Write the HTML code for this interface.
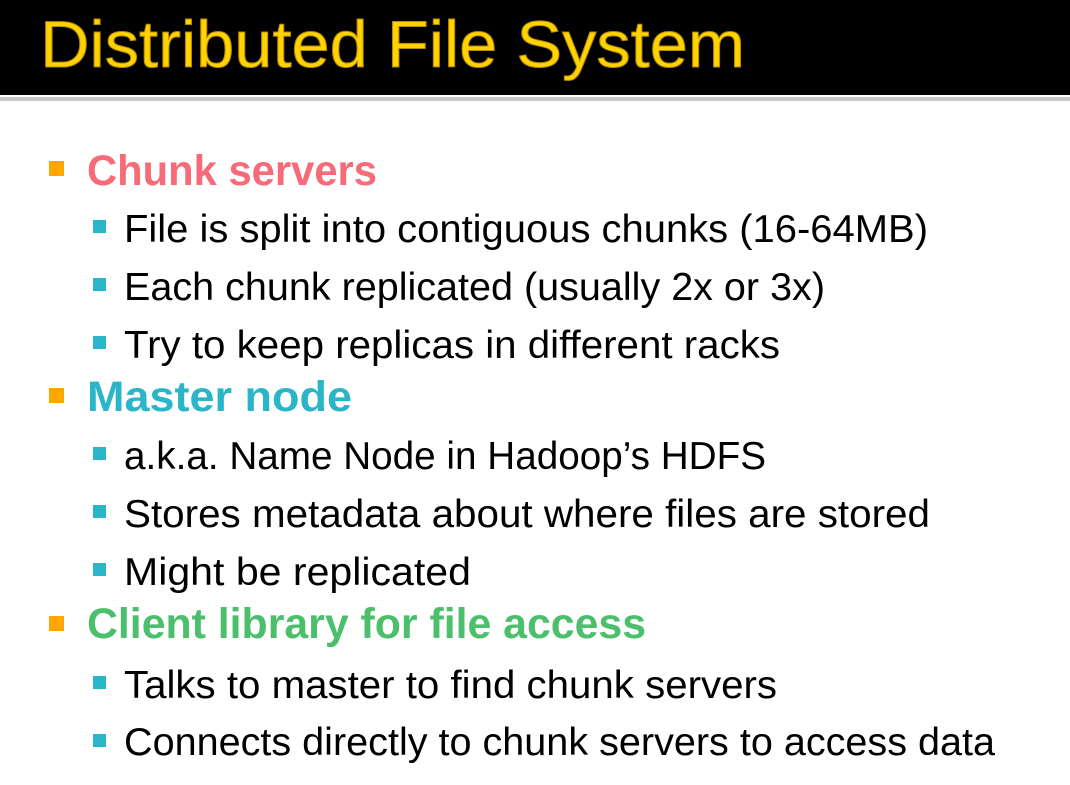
<!DOCTYPE html>
<html><head><style>
html,body{margin:0;padding:0;background:#fff;width:1070px;height:785px;overflow:hidden}
svg text{font-family:"Liberation Sans",sans-serif}
</style></head><body>
<svg width="1070" height="785" viewBox="0 0 1070 785" xmlns="http://www.w3.org/2000/svg">
<rect x="0" y="0" width="1070" height="95" fill="#000"/>
<rect x="0" y="95" width="1070" height="2" fill="#fff"/>
<rect x="0" y="97" width="1070" height="4" fill="#c8c8c8"/>
<text x="40" y="67" font-size="66" fill="#ffd200" stroke="#b38a00" stroke-width="1" textLength="705" lengthAdjust="spacingAndGlyphs">Distributed File System</text>

<g fill="#ffa500">
<rect x="49" y="161" width="15" height="15"/>
<rect x="49" y="388" width="15" height="15"/>
<rect x="49" y="616" width="15" height="15"/>
</g>
<g fill="#2bb5c9">
<rect x="93" y="220" width="13" height="13"/>
<rect x="93" y="278" width="13" height="13"/>
<rect x="93" y="336" width="13" height="13"/>
<rect x="93" y="447" width="13" height="13"/>
<rect x="93" y="505" width="13" height="13"/>
<rect x="93" y="563" width="13" height="13"/>
<rect x="93" y="676" width="13" height="13"/>
<rect x="93" y="734" width="13" height="13"/>
</g>

<g font-weight="bold" font-size="43">
<text x="87" y="185" fill="#f76a78" textLength="290" lengthAdjust="spacingAndGlyphs">Chunk servers</text>
<text x="87" y="411" fill="#2bb5c9" textLength="265" lengthAdjust="spacingAndGlyphs">Master node</text>
<text x="87" y="638" fill="#4bbf6b" textLength="559" lengthAdjust="spacingAndGlyphs">Client library for file access</text>
</g>
<g font-size="39" fill="#000">
<text x="124" y="242" textLength="804" lengthAdjust="spacingAndGlyphs">File is split into contiguous chunks (16-64MB)</text>
<text x="124" y="300" textLength="701" lengthAdjust="spacingAndGlyphs">Each chunk replicated (usually 2x or 3x)</text>
<text x="124" y="358" textLength="656" lengthAdjust="spacingAndGlyphs">Try to keep replicas in different racks</text>
<text x="124" y="469" textLength="642" lengthAdjust="spacingAndGlyphs">a.k.a. Name Node in Hadoop’s HDFS</text>
<text x="124" y="527" textLength="806" lengthAdjust="spacingAndGlyphs">Stores metadata about where files are stored</text>
<text x="124" y="585" textLength="347" lengthAdjust="spacingAndGlyphs">Might be replicated</text>
<text x="124" y="698" textLength="653" lengthAdjust="spacingAndGlyphs">Talks to master to find chunk servers</text>
<text x="124" y="755" textLength="871" lengthAdjust="spacingAndGlyphs">Connects directly to chunk servers to access data</text>
</g>
</svg>
</body></html>
